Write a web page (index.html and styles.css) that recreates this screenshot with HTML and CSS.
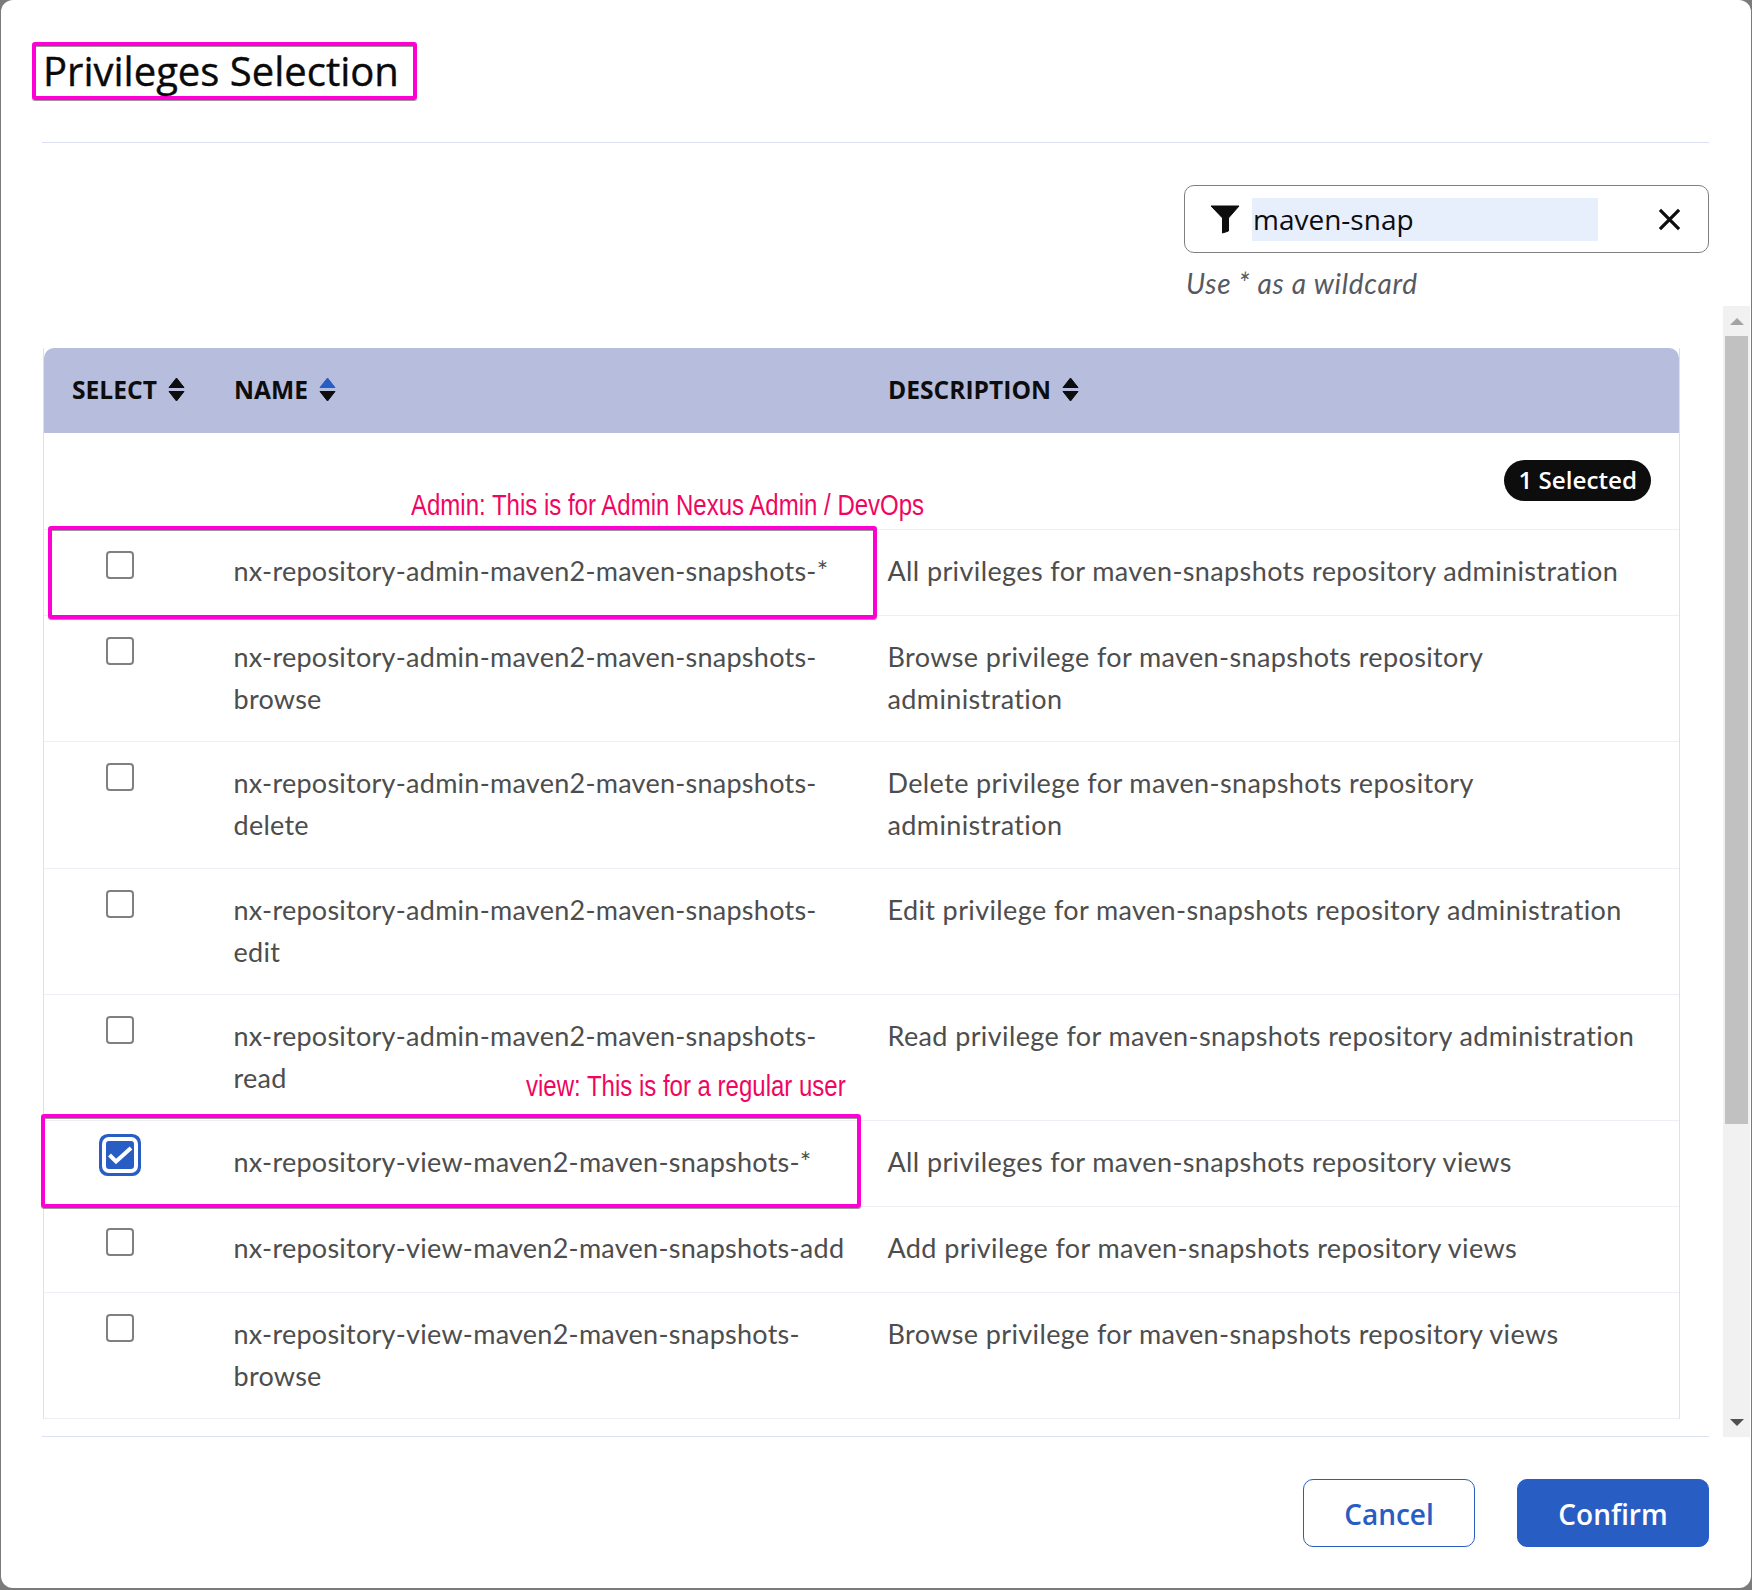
FILE: index.html
```html
<!DOCTYPE html>
<html lang="en">
<head>
<meta charset="utf-8">
<title>Privileges Selection</title>
<link rel="stylesheet" href="styles.css">
</head>
<body>
<div class="dialog">
  <header class="dialog-header">
    <h1 class="title"><span class="title-text">Privileges Selection</span></h1>
  </header>
  <div class="filter-row">
    <div class="filter-col">
      <div class="filter">
        <svg class="filter-icon" viewBox="0 0 30 30"><path d="M1 2h28L18.500 14V27l-6 2V14z" fill="#0d0d0d" stroke="#0d0d0d" stroke-linejoin="round"/></svg>
        <span class="filter-value">maven-snap</span>
        <svg class="clear-icon" viewBox="0 0 24 24"><path d="M2 2l20 20M22 2L2 22" stroke="#0d0d0d" stroke-width="3.400" fill="none"/></svg>
      </div>
      <div class="hint">Use * as a wildcard</div>
    </div>
  </div>
  <div class="pane">
    <div class="pane-content">
      <table class="grid">
        <colgroup><col class="col-select"><col class="col-name"><col class="col-desc"></colgroup>
        <thead>
          <tr>
            <th><span class="th-in">SELECT <svg class="sort" viewBox="0 0 17 25"><path d="M8.500 1l7.500 9.500H1z" fill="#0d0d0d" stroke="#0d0d0d" stroke-linejoin="round"/><path d="M8.500 24L1 14.500h15z" fill="#0d0d0d" stroke="#0d0d0d" stroke-linejoin="round"/></svg></span></th>
            <th><span class="th-in">NAME <svg class="sort" viewBox="0 0 17 25"><path d="M8.500 1l7.500 9.500H1z" fill="#285dc4" stroke="#285dc4" stroke-linejoin="round"/><path d="M8.500 24L1 14.500h15z" fill="#0d0d0d" stroke="#0d0d0d" stroke-linejoin="round"/></svg></span></th>
            <th><span class="th-in">DESCRIPTION <svg class="sort" viewBox="0 0 17 25"><path d="M8.500 1l7.500 9.500H1z" fill="#0d0d0d" stroke="#0d0d0d" stroke-linejoin="round"/><path d="M8.500 24L1 14.500h15z" fill="#0d0d0d" stroke="#0d0d0d" stroke-linejoin="round"/></svg></span></th>
          </tr>
        </thead>
        <tbody>
          <tr class="count-row"><td colspan="3"><span class="pill">1 Selected</span></td></tr>
          <tr><td><span class="check"></span></td><td>nx-repository-admin-maven2-maven-snapshots-*</td><td>All privileges for maven-snapshots repository administration</td></tr>
          <tr><td><span class="check"></span></td><td>nx-repository-admin-maven2-maven-snapshots-browse</td><td>Browse privilege for maven-snapshots repository administration</td></tr>
          <tr><td><span class="check"></span></td><td>nx-repository-admin-maven2-maven-snapshots-delete</td><td>Delete privilege for maven-snapshots repository administration</td></tr>
          <tr><td><span class="check"></span></td><td>nx-repository-admin-maven2-maven-snapshots-edit</td><td>Edit privilege for maven-snapshots repository administration</td></tr>
          <tr><td><span class="check"></span></td><td>nx-repository-admin-maven2-maven-snapshots-read</td><td>Read privilege for maven-snapshots repository administration</td></tr>
          <tr class="checked-row"><td><span class="check is-checked"><svg viewBox="0 0 28 28"><path d="M3.500 14l6.500 6.500L25 7" stroke="#fff" stroke-width="4" fill="none"/></svg></span></td><td>nx-repository-view-maven2-maven-snapshots-*</td><td>All privileges for maven-snapshots repository views</td></tr>
          <tr><td><span class="check"></span></td><td>nx-repository-view-maven2-maven-snapshots-add</td><td>Add privilege for maven-snapshots repository views</td></tr>
          <tr><td><span class="check"></span></td><td>nx-repository-view-maven2-maven-snapshots-browse</td><td>Browse privilege for maven-snapshots repository views</td></tr>
        </tbody>
      </table>
    </div>
    <div class="scrollbar">
      <div class="sb-btn"><span class="arrow-up"></span></div>
      <div class="sb-thumb"></div>
      <div class="sb-rest"></div>
      <div class="sb-btn sb-btn-down"><span class="arrow-down"></span></div>
    </div>
  </div>
  <footer class="actions">
    <button class="btn btn-outline">Cancel</button>
    <button class="btn btn-primary">Confirm</button>
  </footer>
  <div class="note note-admin"><span>Admin: This is for Admin Nexus Admin / DevOps</span></div>
  <div class="note note-view"><span>view: This is for a regular user</span></div>
  <div class="mark mark-admin"></div>
  <div class="mark mark-view"></div>
</div>
</body>
</html>
```
FILE: styles.css
```css
* { box-sizing: border-box; }
html, body { margin: 0; height: 100%; }
body { background: #7b7b7b; font-family: "Open Sans", sans-serif; }
.dialog {
  position: relative;
  width: 1750px;
  height: 1588px;
  margin-left: 1px;
  background: #fff;
  border-radius: 12px;
  overflow: hidden;
  display: flex;
  flex-direction: column;
}
.dialog-header {
  height: 143px;
  margin: 0 42px 0 41px;
  border-bottom: 1px solid #dde0f0;
  flex: none;
}
.title {
  margin: 0;
  padding-top: 42px;
  font-size: 40px;
  line-height: 58px;
  font-weight: 500;
  color: #0a0a0a;
  -webkit-text-stroke: 0.4px #0a0a0a;
}
.title-text {
  display: block;
  width: 385px;
  height: 58px;
  margin-left: -10px;
  padding-left: 7px;
  line-height: 50px;
  border: 4px solid #ff00d4;
  border-radius: 3px;
  box-shadow: inset 0 1px 0 #999, 0 1px 0 #999;
  white-space: nowrap;
}
.filter-row {
  display: flex;
  justify-content: flex-end;
  padding: 42px 42px 0;
  height: 163px;
  flex: none;
}
.filter-col { width: 525px; }
.filter {
  height: 68px;
  border: 1px solid #7f7f7f;
  border-radius: 10px;
  display: flex;
  align-items: center;
  padding-left: 25px;
}
.filter-icon { width: 30px; height: 30px; flex: none; margin-top: -1px; }
.filter-value {
  width: 346px;
  height: 43px;
  margin-left: 12px;
  padding-left: 1px;
  background: #e8effc;
  font-size: 28px;
  line-height: 42px;
  color: #0d0d0d;
}
.clear-icon { width: 23px; height: 23px; margin-left: 60px; flex: none; }
.hint {
  margin-top: 12px;
  padding-left: 2px;
  font-family: Lato, sans-serif;
  font-style: italic;
  font-size: 28px;
  letter-spacing: 0.7px;
  line-height: 36px;
  color: #555a62;
}
.pane {
  display: flex;
  flex: none;
  height: 1131px;
}
.pane-content {
  width: 1667px;
  margin-left: 41px;
  padding: 42px 29px 0 1px;
  height: 1131px;
  overflow: hidden;
  border-bottom: 1px solid #dde0f0;
  flex: none;
}
.grid {
  width: 100%;
  table-layout: fixed;
  border-collapse: separate;
  border-spacing: 0;
  border-left: 1px solid #dde0f0;
  border-right: 1px solid #dde0f0;
  font-family: Lato, sans-serif;
  font-size: 27px;
  letter-spacing: 0.26px;
  line-height: 42px;
  color: #4d4d4d;
}
.col-select { width: 189px; }
.col-name { width: 654px; }
.grid th {
  height: 85px;
  background: #b7bddd;
  padding: 0 0 2px 1px;
  text-align: left;
  vertical-align: middle;
  font-family: "Open Sans", sans-serif;
  font-size: 24.6px;
  letter-spacing: 0;
  font-weight: 700;
  color: #0d0d0d;
}
.grid th:first-child { padding-left: 28px; border-top-left-radius: 10px; }
.grid th:last-child { border-top-right-radius: 10px; }
.th-in { display: inline-flex; align-items: center; gap: 11px; line-height: 30px; }
.sort { width: 17px; height: 25px; flex: none; }
.grid tbody tr { height: 86px; }
.grid td {
  padding: 20px 35px 21.3px 0;
  vertical-align: top;
  border-bottom: 1px solid #eeeef5;
  overflow-wrap: break-word;
}
.grid td:nth-child(2) { padding-right: 38px; padding-left: 0.5px; }
.grid td:nth-child(3) { letter-spacing: 0.38px; padding-left: 0.5px; }
.grid td:first-child { padding: 21px 0 0 62px; }
.grid .count-row { height: 97px; }
.count-row td { padding: 27px 28px 0 0 !important; text-align: right; }
.pill {
  display: inline-block;
  height: 41px;
  padding: 0 14px;
  border-radius: 21px;
  background: #0d0d0d;
  color: #fff;
  font-family: "Open Sans", sans-serif;
  font-size: 24.2px;
  font-weight: 600;
  letter-spacing: 0;
  line-height: 40px;
  vertical-align: top;
}
.check {
  display: block;
  width: 28px;
  height: 28px;
  border: 2px solid #808080;
  border-radius: 4px;
  background: #fff;
}
.check.is-checked {
  border: 0;
  background: #285dc4;
  box-shadow: 0 0 0 4px #fff, 0 0 0 7px #285dc4;
  border-radius: 3px;
  margin-top: -1px;
}
.check svg { display: block; width: 28px; height: 28px; }
.scrollbar {
  width: 27px;
  margin-left: 14px;
  flex: none;
  background: #f1f1f1;
  display: flex;
  flex-direction: column;
}
.sb-btn { height: 30px; display: flex; align-items: center; justify-content: center; flex: none; }
.sb-thumb { height: 788px; margin: 0 2px; background: #c1c1c1; flex: none; }
.sb-rest { flex: 1; }
.arrow-up { border: 7px solid transparent; border-top: 0; border-bottom: 7px solid #a3a3a3; }
.arrow-down { border: 7px solid transparent; border-bottom: 0; border-top: 7px solid #505050; }
.actions {
  display: flex;
  justify-content: flex-end;
  gap: 42px;
  padding: 42px 42px 0 0;
}
.btn {
  height: 68px;
  border-radius: 10px;
  font-family: "Open Sans", sans-serif;
  font-size: 28px;
  font-weight: 600;
  padding: 1px 0 0;
}
.btn-outline { width: 172px; background: #fff; border: 1px solid #285dc4; color: #285dc4; }
.btn-primary { width: 192px; background: #285dc4; border: 1px solid #285dc4; color: #fff; }
.mark {
  position: absolute;
  border: 4px solid #ff00d4;
  border-radius: 3px;
  box-shadow: inset 0 1px 0 #999, 0 1px 0 #999;
  pointer-events: none;
}
.mark-admin { left: 47px; top: 526px; width: 829px; height: 93px; }
.mark-view { left: 40px; top: 1114px; width: 820px; height: 94px; }
.note {
  position: absolute;
  font-family: "Liberation Sans", sans-serif;
  font-size: 30px;
  line-height: 34px;
  color: #f0055f;
  white-space: nowrap;
}
.note span { display: inline-block; transform: scaleX(0.8); transform-origin: left center; }
.note-admin { left: 410px; top: 488px; }
.note-view { left: 525px; top: 1069px; }
```
